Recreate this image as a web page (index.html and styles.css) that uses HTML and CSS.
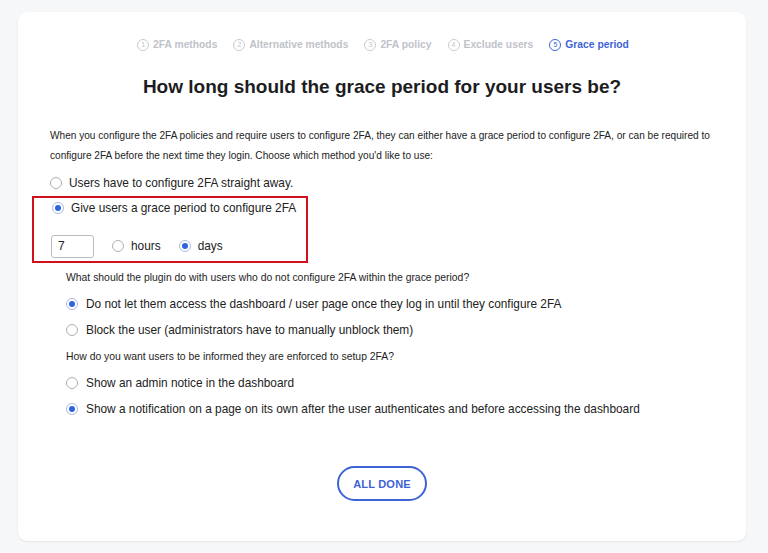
FILE: index.html
```html
<!DOCTYPE html>
<html lang="en">
<head>
<meta charset="utf-8">
<title>Grace period</title>
<link rel="stylesheet" href="styles.css">
</head>
<body>
<div class="card">
  <nav class="steps">
    <span class="step"><span class="num">1</span>2FA methods</span>
    <span class="step"><span class="num">2</span>Alternative methods</span>
    <span class="step"><span class="num">3</span>2FA policy</span>
    <span class="step"><span class="num">4</span>Exclude users</span>
    <span class="step active"><span class="num">5</span>Grace period</span>
  </nav>
  <h1 class="title">How long should the grace period for your users be?</h1>
  <p class="intro">When you configure the 2FA policies and require users to configure 2FA, they can either have a grace period to configure 2FA, or can be required to configure 2FA before the next time they login. Choose which method you'd like to use:</p>

  <div class="opts">
    <label class="opt"><span class="radio"></span>Users have to configure 2FA straight away.</label>
    <div class="highlight">
      <label class="opt"><span class="radio on"></span>Give users a grace period to configure 2FA</label>
      <div class="period">
        <span class="num-input">7</span>
        <label class="opt"><span class="radio"></span>hours</label>
        <label class="opt"><span class="radio on"></span>days</label>
      </div>
    </div>
  </div>

  <div class="sub">
    <p class="q">What should the plugin do with users who do not configure 2FA within the grace period?</p>
    <label class="opt"><span class="radio on"></span>Do not let them access the dashboard / user page once they log in until they configure 2FA</label>
    <label class="opt"><span class="radio"></span>Block the user (administrators have to manually unblock them)</label>
    <p class="q">How do you want users to be informed they are enforced to setup 2FA?</p>
    <label class="opt"><span class="radio"></span>Show an admin notice in the dashboard</label>
    <label class="opt"><span class="radio on"></span>Show a notification on a page on its own after the user authenticates and before accessing the dashboard</label>
  </div>

  <div class="actions">
    <button class="done">ALL DONE</button>
  </div>
</div>
</body>
</html>
```
FILE: styles.css
```css
html, body {
  margin: 0;
  padding: 0;
}
body {
  background: #f6f7f9;
  font-family: "Liberation Sans", Arial, sans-serif;
  color: #1e1e1e;
  padding: 12px 22px 12px 18px;
}
.card {
  background: #fff;
  border-radius: 9px;
  box-shadow: 0 1px 2px rgba(0,0,0,0.08);
  padding: 26px 32px 0 32px;
  height: 529px;
  box-sizing: border-box;
}
.steps {
  display: flex;
  justify-content: center;
  gap: 16px;
  font-size: 10.3px;
  font-weight: bold;
  color: #bfc3ca;
  padding-left: 2px;
}
.step {
  display: inline-flex;
  align-items: center;
  gap: 4px;
  line-height: 14px;
}
.num {
  display: inline-flex;
  align-items: center;
  justify-content: center;
  width: 12px;
  height: 12px;
  border: 1px solid #c9ccd2;
  border-radius: 50%;
  box-sizing: border-box;
  font-size: 7px;
  font-weight: normal;
}
.step.active { color: #3e63d6; }
.step.active .num { border-color: #3e63d6; }
.title {
  margin: 23px 0 0;
  text-align: center;
  font-size: 19px;
  line-height: 24px;
  font-weight: bold;
  color: #1d1d1f;
}
.intro {
  margin: 27px 0 0;
  font-size: 10.1px;
  line-height: 20px;
  color: #222;
}
.opt {
  display: flex;
  align-items: center;
  gap: 7px;
  font-size: 11.85px;
  color: #222;
  height: 26px;
}
.radio {
  width: 12px;
  height: 12px;
  border: 1px solid #aeb0b4;
  border-radius: 50%;
  box-sizing: border-box;
  background: #fff;
  display: inline-flex;
  align-items: center;
  justify-content: center;
  flex: none;
}
.radio.on {
  border-color: #a9bbe6;
}
.radio.on::after {
  content: "";
  width: 6px;
  height: 6px;
  border-radius: 50%;
  background: #2f64e0;
}
.opts {
  margin-top: 4px;
}
.highlight {
  width: 276px;
  margin-left: -18px;
  padding: 0 0 0 17px;
  border: 2px solid #d0101d;
  box-sizing: border-box;
  height: 67px;
}
.highlight > .opt {
  padding-left: 1px;
  margin-top: -3px;
}
.period {
  display: flex;
  align-items: center;
  gap: 18px;
  margin-top: 12px;
}
.num-input {
  width: 43px;
  height: 23px;
  border: 1px solid #bcbcbc;
  border-radius: 3px;
  box-sizing: border-box;
  font-size: 12px;
  line-height: 21px;
  padding-left: 6px;
}
.sub {
  padding-left: 16px;
  margin-top: 1px;
}
.q {
  margin: 0;
  font-size: 10.4px;
  height: 27px;
  display: flex;
  align-items: center;
}
.sub .opt {
  padding-left: 0;
  gap: 8px;
}
.actions {
  display: flex;
  justify-content: center;
  margin-top: 44px;
}
.done {
  width: 90px;
  height: 35px;
  border: 2px solid #3e63d6;
  border-radius: 18px;
  background: #fff;
  color: #3e63d6;
  font-family: "Liberation Sans", Arial, sans-serif;
  font-weight: bold;
  font-size: 11px;
  letter-spacing: 0.2px;
}
```
